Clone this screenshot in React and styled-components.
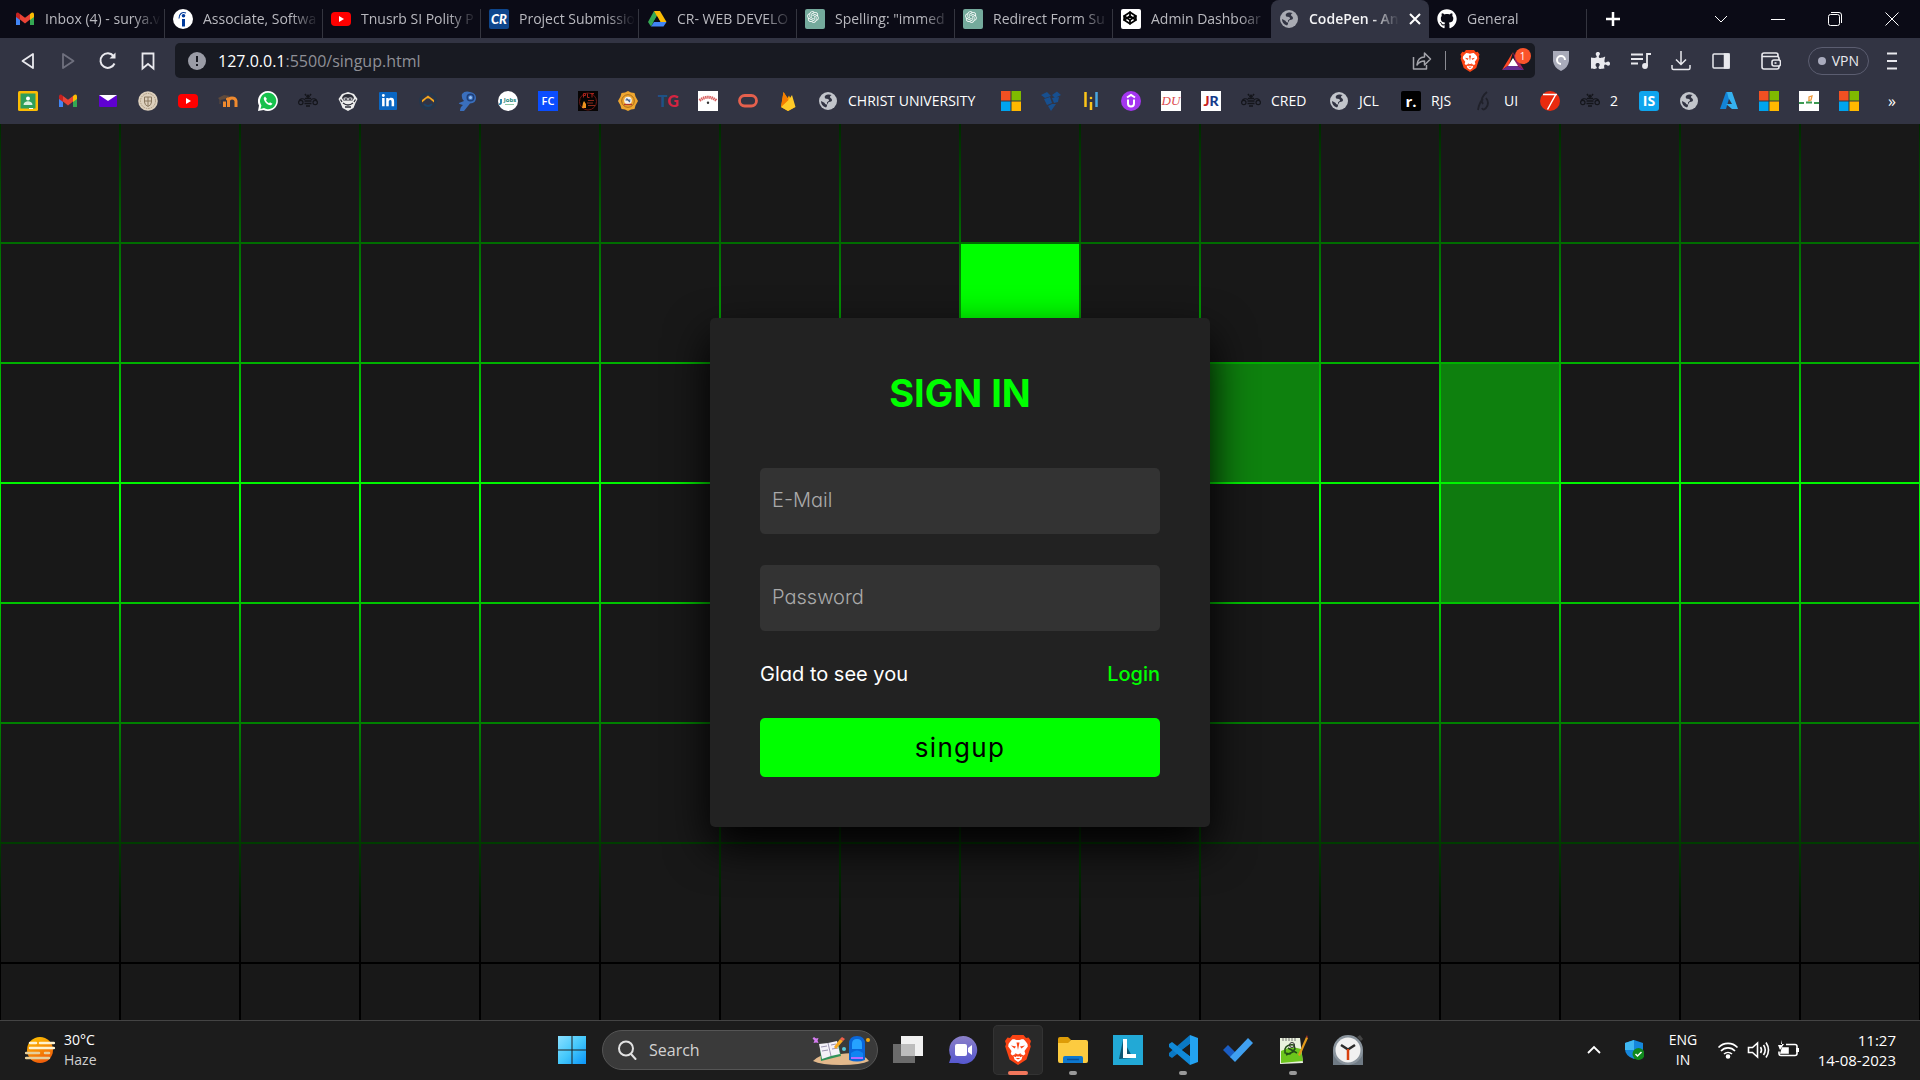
import React, { useState } from "react";
import styled, { createGlobalStyle, css } from "styled-components";
import { FaGithub, FaLinkedinIn, FaPuzzlePiece } from "react-icons/fa";
import { RiOpenaiFill } from "react-icons/ri";
import { FiCodepen } from "react-icons/fi";

const UI_FONT = '"Open Sans", "Noto Sans", sans-serif';
const PAGE_FONT = 'Inter, "Open Sans", sans-serif';

const GlobalStyle = createGlobalStyle`
  *, *::before, *::after { box-sizing: border-box; margin: 0; padding: 0; }
  body { background: #000; font-family: ${UI_FONT}; }
  button { border: 0; background: none; font: inherit; color: inherit; cursor: pointer; }
  a { color: inherit; text-decoration: none; }
  svg { display: block; flex: none; }
`;

/* ---------- shell ---------- */

const Screen = styled.div`
  display: flex;
  flex-direction: column;
  height: 100vh;
  overflow: hidden;
`;

const row = css`
  display: flex;
  align-items: center;
`;

/* ---------- tab strip ---------- */

const TabStrip = styled.header`
  ${row}
  height: 38px;
  padding-left: 7px;
  background: #0b0b16;
  color: #b9b9bf;
`;

const Tabs = styled.nav`
  display: flex;
  flex: 0 1 1580px;
  min-width: 0;
  height: 38px;
`;

const Tab = styled.button`
  ${row}
  flex: 0 1 158px;
  min-width: 0;
  gap: 10px;
  padding: 0 4px 0 8px;
  font-size: 14px;
  line-height: 20px;
  background: ${(p) => (p.$active ? "#323443" : "linear-gradient(#34353f, #34353f) right bottom / 1px 29px no-repeat")};
  ${(p) => p.$last && "background: none;"}
  ${(p) => p.$active && "padding-right: 8px;"}
  border-radius: ${(p) => (p.$active ? "8px 8px 0 0" : "0")};
  color: ${(p) => (p.$active ? "#f4f4f6" : "inherit")};
  font-weight: ${(p) => (p.$active ? 600 : 400)};
`;

const TabTitle = styled.span`
  flex: 1;
  min-width: 0;
  overflow: hidden;
  white-space: nowrap;
  text-align: left;
  mask-image: linear-gradient(90deg, #000 calc(100% - 28px), transparent);
`;

const NewTab = styled.button`
  ${row}
  justify-content: center;
  width: 52px;
  height: 38px;
  color: #fff;
`;

const WindowControls = styled.div`
  display: flex;
  margin-left: auto;
`;

const WindowButton = styled.button`
  ${row}
  justify-content: center;
  width: 57px;
  height: 38px;
  color: #fff;
`;

/* ---------- toolbar ---------- */

const Toolbar = styled.div`
  ${row}
  height: 45px;
  padding: 0 8px;
  background: #323443;
  color: #e9e9ee;
`;

const ToolButton = styled.button`
  ${row}
  justify-content: center;
  width: ${(p) => p.$width || 40}px;
  height: 36px;
  color: ${(p) => (p.$muted ? "#6f707e" : "inherit")};
`;

const AddressBar = styled.div`
  ${row}
  flex: 1;
  min-width: 0;
  height: 35px;
  margin: 0 6px 0 7px;
  padding: 0 0 0 13px;
  border-radius: 5px;
  background: #181a22;
  font-size: 16px;
  line-height: 24px;
`;

const Host = styled.label`
  padding-left: 12px;
  color: #fff;
`;

const PathInput = styled.input`
  flex: 1;
  min-width: 0;
  border: 0;
  outline: 0;
  background: none;
  color: #8f9097;
  font: inherit;
`;

const BarDivider = styled.span`
  width: 1px;
  height: 19px;
  margin: 0 3px;
  background: #8a8b92;
`;

const RewardsButton = styled(ToolButton)`
  position: relative;
`;

const Count = styled.span`
  position: absolute;
  top: 5px;
  right: 4px;
  width: 16px;
  height: 16px;
  border-radius: 8px;
  background: #fb542b;
  color: #fff;
  font-size: 10px;
  line-height: 16px;
  text-align: center;
`;

const VpnButton = styled.button`
  ${row}
  gap: 6px;
  height: 28px;
  margin: 0 3px 0 7px;
  padding: 0 9px;
  border: 1px solid #5b5d70;
  border-radius: 14px;
  font-size: 14px;
  line-height: 20px;
  &::before {
    content: "";
    width: 8px;
    height: 8px;
    border-radius: 4px;
    background: #a9abbd;
  }
`;

/* ---------- bookmarks ---------- */

const Bookmarks = styled.nav`
  ${row}
  gap: 20px;
  height: 41px;
  padding: 0 24px 5px 18px;
  background: #323443;
  color: #fff;
  font-size: 14px;
  line-height: 20px;
`;

const Bookmark = styled.a`
  ${row}
  flex: none;
  gap: 10px;
  width: ${(p) => p.$width || 20}px;
  height: 20px;
  white-space: nowrap;
`;

const Overflow = styled.button`
  margin-left: auto;
  font-size: 16px;
  line-height: 20px;
`;

const Badge = styled.span`
  flex: none;
  width: 20px;
  height: 20px;
  border-radius: ${(p) => p.$radius || 0}px;
  background: ${(p) => p.$bg || "transparent"};
  color: ${(p) => p.$color || "#fff"};
  font: ${(p) => p.$font || `700 12px ${UI_FONT}`};
  line-height: 20px;
  text-align: center;
  white-space: nowrap;
`;

const Ink = styled.span`
  color: ${(p) => p.$color};
`;

/* ---------- page ---------- */

const Stage = styled.main`
  display: grid;
  flex: 1;
  min-height: 0;
  overflow: hidden;
  background: linear-gradient(#000 -8%, #0f0 42%, #000 92%);
`;

const Tiles = styled.div`
  grid-area: 1 / 1;
  display: grid;
  grid-template-columns: repeat(16, 1fr);
  align-content: start;
  gap: 2px;
  min-height: 0;
  padding: 0 1px;
`;

const Tile = styled.span`
  aspect-ratio: 1;
  background: ${(p) => p.$color || "#181818"};
`;

const Card = styled.form`
  grid-area: 1 / 1;
  place-self: center;
  display: flex;
  flex-direction: column;
  gap: 31px;
  width: 500px;
  padding: 50px;
  border-radius: 5px;
  background: #222;
  box-shadow: 0 19px 44px #000;
  font-family: ${PAGE_FONT};
  font-feature-settings: "cv11";
  font-size: 20px;
  line-height: 25px;
`;

const Title = styled.h1`
  padding-bottom: 19px;
  color: #0f0;
  font-size: 38px;
  font-weight: 700;
  line-height: 50px;
  text-align: center;
  text-transform: uppercase;
`;

const Field = styled.div`
  display: grid;
  align-items: center;
  height: 66px;
  border-radius: 5px;
  background: #333;
`;

const FieldLabel = styled.label`
  grid-area: 1 / 1;
  padding: 0 12px;
  color: #aaa;
  font-weight: 300;
  pointer-events: none;
`;

const FieldInput = styled.input`
  grid-area: 1 / 1;
  width: 100%;
  height: 66px;
  padding: 0 12px;
  border: 0;
  outline: 0;
  background: none;
  color: #fff;
  font: inherit;
`;

const Links = styled.p`
  display: flex;
  justify-content: space-between;
  color: #fff;
`;

const LoginLink = styled.a`
  color: #0f0;
  font-weight: 500;
`;

const Submit = styled.button`
  height: 59px;
  border-radius: 5px;
  background: #0f0;
  color: #000;
  font-size: 26px;
  font-weight: 400;
  letter-spacing: 0.05em;
`;

/* ---------- taskbar ---------- */

const Taskbar = styled.footer`
  display: grid;
  grid-template-columns: 1fr auto 1fr;
  align-items: center;
  height: 60px;
  padding-bottom: 1px;
  border-top: 1px solid #444;
  background: #1c1c1c;
  color: #fff;
  font-size: 14px;
  line-height: 20px;
`;

const Weather = styled.button`
  ${row}
  gap: 9px;
  padding-left: 25px;
  text-align: left;
`;

const Muted = styled.span`
  display: block;
  color: #d0d0d0;
`;

const Apps = styled.nav`
  ${row}
  gap: 5px;
`;

const AppButton = styled.button`
  ${row}
  position: relative;
  justify-content: center;
  width: 50px;
  height: 50px;
  border-radius: 5px;
  ${(p) => p.$active && "background: #292929; box-shadow: inset 0 0 0 1px #333;"}
  &::after {
    content: "";
    position: absolute;
    bottom: 0;
    left: 50%;
    width: ${(p) => (p.$active ? 20 : 8)}px;
    height: 4px;
    border-radius: 2px;
    background: ${(p) => (p.$active ? "#f2775c" : "#999")};
    transform: translateX(-50%);
    display: ${(p) => (p.$running ? "block" : "none")};
  }
`;

const Search = styled.div`
  ${row}
  gap: 12px;
  width: 276px;
  height: 40px;
  padding: 0 6px 0 14px;
  border: 1px solid #555;
  border-radius: 20px;
  background: #3a3a3a;
`;

const SearchInput = styled.input`
  flex: 1;
  min-width: 0;
  border: 0;
  outline: 0;
  background: none;
  color: #fff;
  font: 16px ${UI_FONT};
  &::placeholder {
    color: #d2d2d2;
    opacity: 1;
  }
`;

const Tray = styled.div`
  ${row}
  justify-content: flex-end;
  padding-right: 24px;
`;

const TrayButton = styled.button`
  ${row}
  justify-content: center;
  width: ${(p) => p.$width}px;
  height: 40px;
  text-align: center;
`;

const Clock = styled.time`
  width: 92px;
  font-size: 15px;
  text-align: right;
`;

/* ---------- drawings ---------- */

const Ico = ({ s = 20, vb = 20, children, ...rest }) => (
  <svg width={s} height={s} viewBox={`0 0 ${vb} ${vb}`} fill="none" aria-hidden="true" {...rest}>
    {children}
  </svg>
);

const Gmail = () => (
  <Ico>
    <path d="M1 5v11h4V9z" fill="#4285f4" />
    <path d="M19 5v11h-4V9z" fill="#34a853" />
    <path d="M1 5.500V8l4 3V5L3.500 3.800Q1 3 1 5.500z" fill="#c5221f" />
    <path d="M19 5.500V8l-4 3V5l1.500-1.200Q19 3 19 5.500z" fill="#fbbc04" />
    <path d="M5 5l5 3.800L15 5v5.500l-5 4-5-4z" fill="#ea4335" />
  </Ico>
);
const YouTube = () => (
  <Ico>
    <rect y="3" width="20" height="14" rx="4" fill="#f00" />
    <path d="M8 7v6l5-3z" fill="#fff" />
  </Ico>
);
const Indeed = () => (
  <Ico>
    <circle cx="10" cy="10" r="10" fill="#fff" />
    <circle cx="10.500" cy="6.800" r="1.800" fill="#003a9b" />
    <path d="M9 10h3v7.500H9z" fill="#003a9b" />
    <path d="M6 9.500c0-4.500 3-7 7-5.500" stroke="#003a9b" strokeWidth="1.100" />
  </Ico>
);
const Drive = () => (
  <Ico>
    <path d="M7 2 1 13l3 4.500L10 7z" fill="#34a853" />
    <path d="M7 2h6l6.500 11H13z" fill="#fbbc04" />
    <path d="M4 17.500 7 13h12.500l-3 4.500z" fill="#4285f4" />
    <path d="m10 7 3.500 6H6.500z" fill="#0b0b16" />
  </Ico>
);
const OpenAi = () => (
  <Ico>
    <rect width="20" height="20" rx="2" fill="#74aa9c" />
    <RiOpenaiFill x="1" y="1" width="18" height="18" color="#fff" />
  </Ico>
);
const CodePen = () => (
  <Ico>
    <rect width="20" height="20" rx="2" fill="#fff" />
    <FiCodepen x="2" y="2" width="16" height="16" color="#000" strokeWidth="3" />
  </Ico>
);
const Globe = ({ color = "#c2c5cb" }) => (
  <Ico>
    <circle cx="10" cy="10" r="9" fill={color} />
    <path
      d="M11 3.500c-3 0-5 1.500-4 3.500.8 1.500 3.500.5 4 2 .5 1.200-2 1.500-2 3s.5 3.500-1 4.500C4.500 15.500 3 13 3 10l3 1.500c1 .5 1 2 2.500 2s1-2 2.500-2.500 3-.5 3-2-2-2-2-3 1-1.500 1.500-2A8 8 0 0 0 11 3.500z"
      fill="#323443"
    />
  </Ico>
);
const BraveLion = ({ s = 22 }) => (
  <Ico s={s} vb={30}>
    <path d="M9.500 0h11l2.500 3 2.500-.5L28 6l-1 3 .8 2.500-4.300 13L15 30l-8.500-5.500-4.300-13L3 9 2 6l2.500-3.500L7 3z" fill="#fb4414" />
    <path
      d="M15 5c2 0 3.500-1 5.500-.7 1.500 1.200 3 3 4 4.700l.3 2.500-3.300 4.500.8 3-1.800 1.500-3-1.500-2 1.500 2 1.800L19.500 21l-1 3.500L15 27l-3.500-2.500-1-3.500 2 1.300 2-1.800-2-1.500-3 1.500L7.700 19l.8-3-3.300-4.500.3-2.500c1-1.700 2.500-3.500 4-4.700C11.500 4 13 5 15 5z"
      fill="#fff"
    />
    <path d="m8 10.500 5 1-1.500 2zM22 10.500l-5 1 1.500 2zM13.500 7.500h3L15 15zM12 18l3 1.500 3-1.500-2 3.500h-2zM12.500 23h5L15 24.500z" fill="#fb4414" />
  </Ico>
);
const Classroom = () => (
  <Ico>
    <rect width="20" height="20" rx="1.500" fill="#fbbc04" />
    <rect x="2.500" y="2.500" width="15" height="15" fill="#2f9e5b" />
    <circle cx="10" cy="7.500" r="2" fill="#fff" />
    <path d="M5.500 14c0-5 9-5 9 0z" fill="#d8f0df" />
    <path d="M11 17h4v1h-4z" fill="#fff" />
  </Ico>
);
const Mail = () => (
  <Ico>
    <rect x="1" y="4" width="18" height="12" rx="1" fill="#5f01d1" />
    <path d="M1 4h18l-9 6z" fill="#fff" />
  </Ico>
);
const Crest = () => (
  <Ico>
    <circle cx="10" cy="10" r="9.800" fill="#ddd0bd" />
    <circle cx="10" cy="10" r="7.500" stroke="#a8967d" strokeDasharray="1.500 1" />
    <path d="M6.500 6h7v5q0 3-3.500 4.500-3.500-1.500-3.500-4.500z" stroke="#8a7860" />
    <path d="M10 6v9M6.500 10h7" stroke="#8a7860" />
  </Ico>
);
const Award = () => (
  <Ico>
    <path d="m10 0 3 1.500 3.500.5 1 3.500L20 10l-2.500 4.500-1 3.500-3.500.5L10 20l-3-1.500-3.500-.5-1-3.500L0 10l2.500-4.500L3.500 2 7 1.500z" fill="#efa62f" />
    <circle cx="10" cy="10" r="6.300" stroke="#a66a1c" />
    <circle cx="10" cy="9.500" r="3.800" fill="#f3f1ec" />
    <path d="M7.500 9h5M8.500 7.500 12 11" stroke="#3e5f92" strokeWidth="1.200" />
    <path d="M6 13.500h8" stroke="#b5382a" strokeWidth="1.300" />
  </Ico>
);
const Moodle = () => (
  <Ico>
    <path d="M4.500 16V10q0-3 3-3t3 3v6M10.500 10q0-3 3.500-3t4 3v6" stroke="#f08a2e" strokeWidth="3" />
    <path d="M0 4h8v13H0z" fill="#323443" />
    <path d="M6.500 16V10.500" stroke="#f08a2e" strokeWidth="3" />
    <path d="m0 7 6-3 6 1-5 3-5 1z" fill="#5f4a3c" />
    <path d="M2 8v5" stroke="#5f4a3c" />
  </Ico>
);
const WhatsApp = () => (
  <Ico>
    <path d="M10 0a10 10 0 1 1-4.500 19L0 20l1-5.500A10 10 0 0 1 10 0z" fill="#fff" />
    <path d="M10 1.800a8.200 8.200 0 1 1-4 15.300L2.500 18l.9-3.500A8.200 8.200 0 0 1 10 1.800z" fill="#18c14d" />
    <path d="M7 5.500 5.800 7c-.5 3 4.200 8 7.200 7.200l1.500-1.500-2.500-1.500-1 1C9.500 11.500 8.500 10.500 8 9l1-1z" fill="#fff" />
  </Ico>
);
const Bee = () => (
  <Ico>
    <path d="M8 4.500 7 3M12 4.500 13 3M7 7.500h6M6.500 10h7M6.500 12.500h7M8 15h4" stroke="#14151b" strokeWidth="1.500" />
    <circle cx="10" cy="5.300" r="1.800" fill="#14151b" />
    <path d="M7 8.500C4.500 7 2 8 1.300 9.500M13 8.500c2.500-1.500 5-.5 5.700 1" stroke="#14151b" strokeWidth="1.200" />
    <circle cx="2.800" cy="11.500" r="2.200" stroke="#14151b" strokeWidth="1.200" />
    <circle cx="17.200" cy="11.500" r="2.200" stroke="#14151b" strokeWidth="1.200" />
  </Ico>
);
const Monkey = () => (
  <Ico>
    <path d="m10 1 6 2 3.500 5-2 4-2 5L10 20l-5.500-3-2-5-2-4L4 3z" fill="#ececec" />
    <path d="M10 3q5 0 6 4l-1.500 2.500h-9L4 7q1-4 6-4z" fill="#2d2e38" />
    <path d="M5.500 7q2-1.500 4.500 0 2.500-1.500 4.500 0V9h-9z" fill="#b8b8bd" />
    <path d="M7 8.200h2M11 8.200h2M5 12q5 4 10 0M7 16h6M2.500 8.500 4 11M17.500 8.500 16 11" stroke="#2d2e38" strokeWidth="1.300" />
  </Ico>
);
const LinkedIn = () => (
  <Ico>
    <rect x="1" y="1" width="18" height="18" rx="1" fill="#0a66c2" />
    <FaLinkedinIn x="3" y="3" width="14" height="14" color="#fff" />
  </Ico>
);
const Arc = () => (
  <Ico>
    <circle cx="10" cy="10" r="8" stroke="#22384f" strokeWidth="1.800" />
    <path d="M4 11.500V9l6-4.500L16 9v2.500l-3-2.500a3.500 3.500 0 0 0-6 0z" fill="#f3a61e" />
    <path d="M6 13q4 4 8 0" stroke="#1d4468" strokeWidth="2" />
  </Ico>
);
const Comet = () => (
  <Ico>
    <path d="M4 3Q7-.5 12 1q6 1 6 6t-6 5.500L6 20H2q0-4 3-6Q0 13 1 12l5-2q-3-3-2-7z" fill="#3a6fbd" />
    <circle cx="12.500" cy="6.500" r="3.300" stroke="#1f3f78" strokeWidth="1.500" />
    <circle cx="12.500" cy="6.500" r="1.500" fill="#9cc3f2" />
  </Ico>
);
const JobsDisc = () => (
  <Ico>
    <circle cx="10" cy="10" r="10" fill="#fff" />
    <path d="M3 8v3.500q0 2-2 1.500" stroke="#1c7fa8" strokeWidth="1.800" />
    <text x="12" y="11" fontSize="6" fontWeight="700" fontFamily="Open Sans" fill="#23867a" textAnchor="middle">Jobs</text>
    <path d="M7 13.500h9" stroke="#8ec7a4" />
  </Ico>
);
const DarkPoster = () => (
  <Ico>
    <rect width="20" height="20" fill="#070404" />
    <circle cx="10" cy="10.500" r="8.500" stroke="#6b1714" />
    <path d="M5.500 6.500v-4h2v2h-2M9.500 2.500v4h2M14 6.500v-4M12.500 2.500h3.500" stroke="#a8231b" />
    <path d="m4 17 1-5 1-2 2 3v4z" fill="#f0931f" />
    <path d="M10 9.500h6M9 12h6M10 14.500h7" stroke="#8a2a1a" />
  </Ico>
);
const RedArch = () => (
  <Ico>
    <rect width="20" height="20" fill="#fff" />
    <path d="M1.500 9.500Q10 3 18.500 9.500" stroke="#d96060" strokeWidth="3" strokeDasharray="1.500 .6" />
    <circle cx="10" cy="11.800" r="1.200" fill="#333" />
  </Ico>
);
const RingOval = () => (
  <Ico>
    <rect x="1.500" y="4.500" width="17" height="10.500" rx="5.200" stroke="#e5604d" strokeWidth="2.800" />
  </Ico>
);
const Firebase = () => (
  <Ico>
    <path d="M3 16 5.500 1l4 6 1.500-2.500L17 16l-7 4z" fill="#ffa000" />
    <path d="m3 16 9-9 2-3 3.500 12L10 20z" fill="#ffca28" />
    <path d="m3 16 2.500-15 5 8z" fill="#f57c00" />
  </Ico>
);
const Microsoft = () => (
  <Ico>
    <path d="M0 0h9.500v9.500H0z" fill="#f25022" />
    <path d="M10.500 0H20v9.500h-9.500z" fill="#7fba00" />
    <path d="M0 10.500h9.500V20H0z" fill="#00a4ef" />
    <path d="M10.500 10.500H20V20h-9.500z" fill="#ffb900" />
  </Ico>
);
const Shards = () => (
  <Ico>
    <path d="m0 4 6-3 4 4-6 2zM11 4l5-3.500L20 4l-6 3zM3 8l6-2 2 6-5 2zM11 7l7-1-1 5-4 1zM7 15l4-2 4 0-5 7z" fill="#174f8f" />
  </Ico>
);
const Bars = () => (
  <Ico>
    <path d="M4.500 1v15M10 11v8" stroke="#fcc419" strokeWidth="2.500" />
    <path d="M15.500 1v15" stroke="#49a6e0" strokeWidth="2.500" />
    <circle cx="10" cy="7" r="1.300" fill="#fcc419" />
  </Ico>
);
const Udemy = () => (
  <Ico>
    <circle cx="10" cy="10" r="10" fill="#a435f0" />
    <path d="m6 6.500 4-2.500 4 2.500M7 8.500v4q0 3 3 3t3-3v-4" stroke="#fff" strokeWidth="2" />
  </Ico>
);
const Feather = () => (
  <Ico>
    <path d="M13 1c-4 3-7 8-4 12M9 8q-4 4-5 11M12 7q4 5 0 10-3 3-4 0" stroke="#20212a" strokeWidth="1.800" />
  </Ico>
);
const Seven = () => (
  <Ico>
    <circle cx="10" cy="10" r="10" fill="#ea2a0e" />
    <path d="M3 3.500h14M15.500 4 7.500 18.500" stroke="#fff" strokeWidth="1.500" />
  </Ico>
);
const Azure = () => (
  <Ico>
    <path d="M7 1h5L7 18H1z" fill="#1383d6" />
    <path d="M8 1h5l6 17h-6L7 13h6L9.500 7z" fill="#35b1ee" />
  </Ico>
);
const Sprout = () => (
  <Ico>
    <rect width="20" height="20" fill="#fff" />
    <path d="M10 10V6l3-1-1 4-3 1" stroke="#ef9a3c" strokeWidth="1.300" />
    <path d="M0 12h5M7 11.500h6M15 12h5" stroke="#3c9a52" strokeWidth="2" />
  </Ico>
);

const Haze = () => (
  <svg width="30" height="26" viewBox="0 0 30 26" aria-hidden="true">
    <defs>
      <linearGradient id="sun" x1="0" y1="0" x2=".4" y2="1">
        <stop stopColor="#ffc700" />
        <stop offset="1" stopColor="#f0600a" />
      </linearGradient>
    </defs>
    <circle cx="15" cy="13" r="13" fill="url(#sun)" />
    <path d="M5 6h6M15 6h14M5 11h24" stroke="#fff3cf" strokeWidth="2.500" strokeLinecap="round" />
    <path d="M1 16h13M20 16h4M1 21h23" stroke="#e5cf9b" strokeWidth="2.500" strokeLinecap="round" />
  </svg>
);
const Windows = () => (
  <Ico s={30} vb={30}>
    <defs>
      <linearGradient id="win" x1="0" y1="0" x2="1" y2="1">
        <stop stopColor="#8be0ff" />
        <stop offset=".5" stopColor="#45c8fb" />
        <stop offset="1" stopColor="#0a94f7" />
      </linearGradient>
    </defs>
    <path d="M1 1h13.500v13.500H1zM15.500 1H29v13.500H15.500zM1 15.500h13.500V29H1zM15.500 15.500H29V29H15.500z" fill="url(#win)" />
  </Ico>
);
const Campus = () => (
  <svg width="60" height="32" viewBox="0 0 60 32" aria-hidden="true">
    <path d="M2 27Q14 16 30 20q20-3 28 7-8 4-28 4T2 27z" fill="#e3b98c" />
    <path d="m3 3 2 1.500L7.500 4 6.500 6.500l1 2.500L5 8.500 2.500 9l1-2.500-2-2z" fill="#d67cf2" />
    <path d="m9 12 18-4 3 14-20 5z" fill="#31935a" />
    <path d="m8 10 9-1 9-2 3 13-9 2-9 3z" fill="#f4f2f8" />
    <path d="m17 9 3 13M10 13l6-1M11 17l6-1M20 11l5-1M21 15l6-1" stroke="#9a94b0" />
    <path d="m23 13 6-8 3 2-7 8z" fill="#f6a821" />
    <path d="m29 5 2-2 3 2-2 2z" fill="#f2604a" />
    <circle cx="33" cy="15" r="2" fill="#58c9dc" />
    <path d="M38 26V10q0-8 8-8t8 8v16q-8 3-16 0z" fill="#0a66d8" />
    <path d="M41 10q0-5 5-5t5 5v5H41z" fill="#26a3ff" />
    <path d="M40 24v-5q6-5 12 0v5z" fill="#1184f2" />
    <path d="M40 24h12" stroke="#b46bff" strokeWidth="2" />
    <circle cx="57" cy="6" r="2" fill="#f5a80c" />
  </svg>
);
const TaskView = () => (
  <Ico s={30} vb={30}>
    <rect x="8" y="1" width="22" height="20" fill="#f1f1f1" />
    <rect y="9" width="22" height="19" fill="#6b6b6b" />
    <rect x="8" y="9" width="14" height="12" fill="#bdbdbd" />
  </Ico>
);
const Chat = () => (
  <Ico s={30} vb={30}>
    <defs>
      <linearGradient id="chat" x1="0" y1="0" x2="0" y2="1">
        <stop stopColor="#8b80c8" />
        <stop offset="1" stopColor="#5557d0" />
      </linearGradient>
    </defs>
    <path d="M15 1a14 14 0 1 1-5 27H1l2-6A14 14 0 0 1 15 1z" fill="url(#chat)" />
    <rect x="7" y="9" width="12" height="12" rx="2" fill="#fff" />
    <path d="m20 13 4-3v10l-4-3z" fill="#fff" />
  </Ico>
);
const Explorer = () => (
  <Ico s={30} vb={30}>
    <path d="M0 4q0-2 2-2h8l3 3-3 4H0z" fill="#dd9c08" />
    <path d="M0 8h10l3-3h15q2 0 2 2v19q0 2-2 2H2q-2 0-2-2z" fill="#fccb40" />
    <path d="M5 28v-5q0-2 2-2h16q2 0 2 2v5z" fill="#0e78cf" />
    <path d="M9 24.500h12" stroke="#0a4f95" strokeWidth="1.500" />
  </Ico>
);
const LApp = () => (
  <Ico s={30} vb={30}>
    <path d="M0 0h30v30H0z" fill="#22a9d6" />
    <path d="m10 5-4 19 14-1z" fill="#0d5673" />
    <path d="M10 4h4v15h9v4H10z" fill="#fff" />
  </Ico>
);
const VsCode = () => (
  <Ico s={30} vb={30}>
    <path d="m22 0 8 3v24l-8 3z" fill="#23a3f2" />
    <path d="M22 0v9L4 23l-3-2v-3z" fill="#0a78c4" />
    <path d="M22 30v-9L4 7 1 9v3z" fill="#1089d8" />
    <path d="M22 9v12l-8-6z" fill="#1c1c1c" />
  </Ico>
);
const Todo = () => (
  <Ico s={30} vb={30}>
    <path d="m0 15 5-5 8 8-5 5z" fill="#1a5cc2" />
    <path d="m7 22 18-19 5 5-18 19z" fill="#40a0f0" />
  </Ico>
);
const Notepad = () => (
  <Ico s={30} vb={30}>
    <path d="M2 3h20l3 25-23 1z" fill="#e9f1dc" />
    <path d="M3 16q10-6 20-2l2 12-22 2z" fill="#6cc51c" />
    <path d="M5 3v3M8 3v3M11 3v3M14 3v3M17 3v3" stroke="#777" />
    <path d="M7 14q2-5 9-4l1 4-5 5-5-1zM10 13l9 5M8 20l9-4" stroke="#234d16" strokeWidth="1.500" />
    <circle cx="14" cy="10" r="2.500" stroke="#333" />
    <path d="m20 20 8-18 2 1-8 18z" fill="#e29a1b" />
    <path d="m28 2 1-2 1 3z" fill="#b02a2a" />
  </Ico>
);
const ClockApp = () => (
  <Ico s={30} vb={30}>
    <path d="M0 15h30v15H0z" fill="#6f7a84" />
    <circle cx="15" cy="15" r="15" fill="#8a949d" />
    <path d="m24 2 3-2 3 4-2 2z" fill="#444" />
    <circle cx="15" cy="15" r="12.500" fill="#f1f1f1" />
    <path d="m8 10 7 4.500 7-4.500" stroke="#2b2b2b" strokeWidth="2.500" />
    <path d="M15 14v11" stroke="#d8400f" strokeWidth="2.500" />
  </Ico>
);

/* ---------- data ---------- */

const TABS = [
  ["Inbox (4) - surya.v", <Gmail />],
  ["Associate, Softwa", <Indeed />],
  ["Tnusrb SI Polity P", <YouTube />],
  ["Project Submissio", <Badge $bg="#0e468c" $radius={2} $font="italic 900 13px Lato, sans-serif">CR</Badge>],
  ["CR- WEB DEVELO", <Drive />],
  ['Spelling: "immed', <OpenAi />],
  ["Redirect Form Su", <OpenAi />],
  ["Admin Dashboar", <CodePen />],
  ["CodePen - An", <Globe color="#a9abb3" />],
  ["General", <FaGithub size={20} color="#fff" />],
];

const BOOKMARKS = [
  ["Classroom", <Classroom />],
  ["Gmail", <Gmail />],
  ["Mail", <Mail />],
  ["College", <Crest />],
  ["YouTube", <YouTube />],
  ["Moodle", <Moodle />],
  ["WhatsApp", <WhatsApp />],
  ["Hive", <Bee />],
  ["Monkey", <Monkey />],
  ["LinkedIn", <LinkedIn />],
  ["Arc", <Arc />],
  ["Comet", <Comet />],
  ["Jobs", <JobsDisc />],
  ["FC", <Badge $bg="#0a4dff" $font={`600 11px ${UI_FONT}`}>FC</Badge>],
  ["Poster", <DarkPoster />],
  ["Award", <Award />],
  ["TG", <Badge $font="900 16px Lato, sans-serif" $color="#d42441"><Ink $color="#1d5285">T</Ink>G</Badge>],
  ["Arch", <RedArch />],
  ["Oval", <RingOval />],
  ["Firebase", <Firebase />],
  ["CHRIST UNIVERSITY", <Globe />, 163],
  ["Microsoft", <Microsoft />],
  ["Shards", <Shards />],
  ["Bars", <Bars />],
  ["Udemy", <Udemy />],
  ["DU", <Badge $bg="#fff" $color="#dc4a4e" $font='italic 400 13px "Liberation Serif", serif'>DU</Badge>],
  ["JR", <Badge $bg="#fff" $color="#153a8a" $font="900 14px Lato, sans-serif"><Ink $color="#c81e1e">J</Ink>R</Badge>],
  ["CRED", <Bee />, 68],
  ["JCL", <Globe />, 52],
  ["RJS", <Badge $bg="#000" $radius={2} $font={`700 15px ${UI_FONT}`}>r.</Badge>, 53],
  ["UI", <Feather />, 46],
  ["Seven", <Seven />],
  ["2", <Bee />, 39],
  ["IS", <Badge $bg="#0fa5ee" $radius={3} $font={`700 14px ${UI_FONT}`}>IS</Badge>],
  ["Globe", <Globe />],
  ["Azure", <Azure />],
  ["Microsoft account", <Microsoft />],
  ["Sprout", <Sprout />],
  ["Microsoft Learn", <Microsoft />],
];

const COLUMNS = 16;
const ROWS = 8;
const LIT = { [COLUMNS + 8]: "#0f0", [COLUMNS * 2 + 10]: "#0e810e", [COLUMNS * 2 + 12]: "#0e800e", [COLUMNS * 3 + 12]: "#0f7a0f" };

const APPS = [
  ["Task view", <TaskView />],
  ["Chat", <Chat />],
  ["Brave", <BraveLion s={30} />, "active"],
  ["File Explorer", <Explorer />, "running"],
  ["L", <LApp />],
  ["Visual Studio Code", <VsCode />, "running"],
  ["To Do", <Todo />],
  ["Notepad++", <Notepad />, "running"],
  ["Clock", <ClockApp />],
];

const TextField = ({ id, label, type }) => {
  const [value, setValue] = useState("");
  return (
    <Field>
      <FieldInput id={id} type={type} value={value} onChange={(e) => setValue(e.target.value)} />
      {!value && <FieldLabel htmlFor={id}>{label}</FieldLabel>}
    </Field>
  );
};

const BrowserChrome = () => (
  <>
    <TabStrip>
      <Tabs aria-label="Tabs">
        {TABS.map(([title, icon], i) => (
          <Tab key={title} $active={i === 8} $last={i === 7}>
            {icon}
            <TabTitle>{title}</TabTitle>
            {i === 8 && (
              <Ico s={12} vb={12} stroke="#fff" strokeWidth="2">
                <path d="m1 1 10 10M11 1 1 11" />
              </Ico>
            )}
          </Tab>
        ))}
      </Tabs>
      <NewTab aria-label="New tab">
        <Ico s={14} vb={14} stroke="currentColor" strokeWidth="2.500"><path d="M7 0v14M0 7h14" /></Ico>
      </NewTab>
      <WindowControls>
        <WindowButton aria-label="Search tabs">
          <Ico s={14} vb={14} stroke="currentColor"><path d="m1 4 6 6 6-6" /></Ico>
        </WindowButton>
        <WindowButton aria-label="Minimize">
          <Ico s={14} vb={14} stroke="currentColor"><path d="M0 7.500h14" /></Ico>
        </WindowButton>
        <WindowButton aria-label="Restore">
          <Ico s={14} vb={14} stroke="currentColor">
            <rect x=".5" y="2.500" width="11" height="11" rx="2" />
            <path d="M3 .5h8q2.500 0 2.500 2.500v8" />
          </Ico>
        </WindowButton>
        <WindowButton aria-label="Close window">
          <Ico s={14} vb={14} stroke="currentColor"><path d="m.5.5 13 13M13.500.5l-13 13" /></Ico>
        </WindowButton>
      </WindowControls>
    </TabStrip>

    <Toolbar>
      <ToolButton aria-label="Back">
        <Ico stroke="currentColor" strokeWidth="1.800" strokeLinejoin="round"><path d="M15 3v14L4.500 10z" /></Ico>
      </ToolButton>
      <ToolButton aria-label="Forward" $muted>
        <Ico stroke="currentColor" strokeWidth="1.800" strokeLinejoin="round"><path d="M5 3v14l10.500-7z" /></Ico>
      </ToolButton>
      <ToolButton aria-label="Reload">
        <Ico stroke="currentColor" strokeWidth="2">
          <path d="M16.500 12.500a7.300 7.300 0 1 1-1-7.500" />
          <path d="M17.500 1.500v6h-6z" fill="currentColor" stroke="none" />
        </Ico>
      </ToolButton>
      <ToolButton aria-label="Bookmark this page">
        <Ico stroke="currentColor" strokeWidth="1.800"><path d="M4.500 2.500h11v15L10 13l-5.500 4.500z" /></Ico>
      </ToolButton>
      <AddressBar>
        <Ico s={18} vb={18}>
          <circle cx="9" cy="9" r="9" fill="#9a9ca6" />
          <path d="M9 4v6M9 12v2" stroke="#181a22" strokeWidth="2" />
        </Ico>
        <Host htmlFor="address">127.0.0.1</Host>
        <PathInput id="address" defaultValue=":5500/singup.html" spellCheck={false} />
        <ToolButton aria-label="Share">
          <Ico stroke="#a3a4aa" strokeWidth="1.500" strokeLinejoin="round">
            <path d="M1.500 6v12h13v-4" />
            <path d="M12.500 2v4C8 6 5.500 9 5 14c2-3 4-4 7.500-4v4l6-6z" />
          </Ico>
        </ToolButton>
        <BarDivider />
        <ToolButton aria-label="Brave Shields" $width={43}><BraveLion /></ToolButton>
        <RewardsButton aria-label="Brave Rewards" $width={43}>
          <Ico s={24} vb={24}>
            <path d="M12 3 1 21l7-5z" fill="#ff4724" />
            <path d="M1 21h22l-8-5H8z" fill="#662d91" />
            <path d="m12 3 11 18-8-5z" fill="#9e1f63" />
            <path d="m12 9 5 8H7z" fill="#fff" />
          </Ico>
          <Count>1</Count>
        </RewardsButton>
      </AddressBar>
      <ToolButton aria-label="Privacy extension">
        <Ico>
          <path d="M2 0h16v10q-1 7-8 10-7-3-8-10z" fill="#a9abba" />
          <path d="M14 9a4 4 0 1 0-4 4" stroke="#fff" strokeWidth="2" />
        </Ico>
      </ToolButton>
      <ToolButton aria-label="Extensions"><FaPuzzlePiece size={19} /></ToolButton>
      <ToolButton aria-label="Media">
        <Ico stroke="currentColor" strokeWidth="1.800">
          <path d="M0 3.500h12M0 8h12M0 12.500h7M16 15V3h4" />
          <circle cx="14" cy="15" r="2" fill="currentColor" />
        </Ico>
      </ToolButton>
      <ToolButton aria-label="Downloads">
        <Ico stroke="currentColor" strokeWidth="1.500"><path d="M10 0v13M5 8.500l5 5 5-5M1 14v3q0 1.500 1.500 1.500h15q1.500 0 1.500-1.500v-3" /></Ico>
      </ToolButton>
      <ToolButton aria-label="Sidebar">
        <Ico stroke="currentColor" strokeWidth="1.500">
          <rect x="2" y="3" width="16" height="14" rx="1" />
          <path d="M13.500 3H18v14h-4.500z" fill="currentColor" />
        </Ico>
      </ToolButton>
      <ToolButton aria-label="Wallet" $width={60}>
        <Ico stroke="currentColor" strokeWidth="1.600">
          <path d="M17 6V4q0-2-2-2H3Q1 2 1 4v12q0 2 2 2h13q2 0 2-2v-1M1 5.500h15q2 0 2 2V9" />
          <rect x="11" y="9" width="8.500" height="6" rx="2" />
          <path d="M13.500 12h2" />
        </Ico>
      </ToolButton>
      <VpnButton>VPN</VpnButton>
      <ToolButton aria-label="Menu">
        <Ico stroke="currentColor" strokeWidth="1.800"><path d="M5 2.500h10M5 10h10M5 17.500h10" /></Ico>
      </ToolButton>
    </Toolbar>

    <Bookmarks aria-label="Bookmarks">
      {BOOKMARKS.map(([name, icon, width]) => (
        <Bookmark key={name} href="#" aria-label={name} $width={width}>
          {icon}
          {width && name}
        </Bookmark>
      ))}
      <Overflow aria-label="More bookmarks">»</Overflow>
    </Bookmarks>
  </>
);

const SignInPage = () => (
  <Stage>
    <Tiles aria-hidden="true">
      {Array.from({ length: COLUMNS * ROWS }, (_, i) => (
        <Tile key={i} $color={LIT[i]} />
      ))}
    </Tiles>
    <Card onSubmit={(e) => e.preventDefault()}>
      <Title>Sign In</Title>
      <TextField id="email" label="E-Mail" type="email" />
      <TextField id="password" label="Password" type="password" />
      <Links>
        Glad to see you
        <LoginLink href="#">Login</LoginLink>
      </Links>
      <Submit type="submit">singup</Submit>
    </Card>
  </Stage>
);

const WindowsTaskbar = () => (
  <Taskbar>
    <Weather>
      <Haze />
      <span>
        30°C
        <Muted>Haze</Muted>
      </span>
    </Weather>
    <Apps aria-label="Taskbar">
      <AppButton aria-label="Start"><Windows /></AppButton>
      <Search>
        <Ico stroke="#e2e2e2" strokeWidth="2" strokeLinecap="round">
          <circle cx="9" cy="8.500" r="7" />
          <path d="m14 14 4.500 5" />
        </Ico>
        <SearchInput aria-label="Search" placeholder="Search" />
        <Campus />
      </Search>
      {APPS.map(([name, icon, state]) => (
        <AppButton key={name} aria-label={name} $active={state === "active"} $running={Boolean(state)}>
          {icon}
        </AppButton>
      ))}
    </Apps>
    <Tray>
      <TrayButton aria-label="Show hidden icons" $width={40}>
        <Ico s={14} vb={14} stroke="#fff" strokeWidth="1.800"><path d="m1 10 6-6 6 6" /></Ico>
      </TrayButton>
      <TrayButton aria-label="Windows Security" $width={40}>
        <Ico>
          <path d="m10 0 9 3v6q0 7-9 10Q1 16 1 9V3z" fill="#1587dc" />
          <path d="M10 0v10H1V3z" fill="#3fb8f2" />
          <circle cx="14.500" cy="14" r="6" fill="#10891c" />
          <path d="m11.500 14 2 2 4-4" stroke="#fff" strokeWidth="1.500" />
        </Ico>
      </TrayButton>
      <TrayButton aria-label="Input language" $width={58}>
        ENG
        <br />
        IN
      </TrayButton>
      <TrayButton aria-label="Network, volume and battery" $width={92}>
        <Ico s={30} vb={30} stroke="#fff" strokeWidth="1.600">
          <path d="M5.500 12.500a13 13 0 0 1 19 0M8 16a9.500 9.500 0 0 1 14 0M11 19a6 6 0 0 1 8 0" />
          <circle cx="15" cy="21.500" r="1.500" fill="#fff" />
        </Ico>
        <Ico s={30} vb={30} stroke="#fff" strokeWidth="1.600">
          <path d="M5.500 12.500h4l5-4.500v14l-5-4.500h-4zM17.500 12q2 3 0 6M20.500 10q3.500 5 0 10M23 7.500q5 7.500 0 15" />
        </Ico>
        <Ico s={30} vb={30} stroke="#fff" strokeWidth="1.600">
          <path d="M13 9.500h9q2 0 2 2v7q0 2-2 2H8q-2 0-2-2v-2" />
          <path d="M24.500 13v4" strokeWidth="3" />
          <path d="M9.500 13H15v5H8z" fill="#fff" />
          <path d="M9 5v5H5l2 5 4-6H8z" fill="#fff" stroke="none" />
        </Ico>
      </TrayButton>
      <Clock>
        11:27
        <br />
        14-08-2023
      </Clock>
    </Tray>
  </Taskbar>
);

export default function App() {
  return (
    <Screen>
      <GlobalStyle />
      <BrowserChrome />
      <SignInPage />
      <WindowsTaskbar />
    </Screen>
  );
}
